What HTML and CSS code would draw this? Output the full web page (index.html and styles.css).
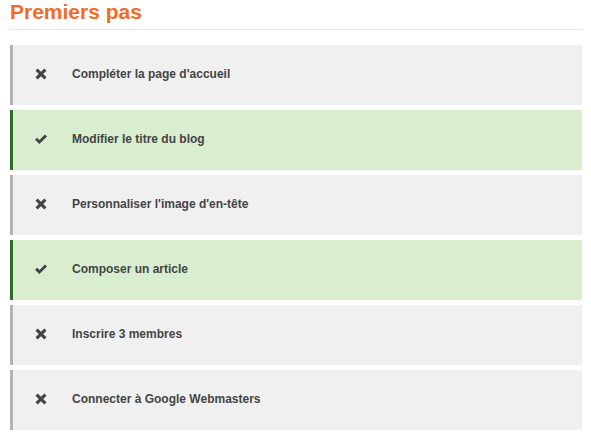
FILE: index.html
```html
<!DOCTYPE html>
<html lang="fr">
<head>
  <meta charset="UTF-8">
  <title>Premiers pas</title>
  <link rel="stylesheet" href="styles.css">
</head>
<body>
  <div class="steps">
    <h2 class="steps-title">Premiers pas</h2>

    <ul class="step-list">
      <li class="step">
        <svg class="step-icon" viewBox="0 0 12 12"><path d="M0.5 2.7 2.7 0.5 6 3.8 9.3 0.5 11.5 2.7 8.2 6 11.5 9.3 9.3 11.5 6 8.2 2.7 11.5 0.5 9.3 3.8 6Z"/></svg>
        <span>Compléter la page d'accueil</span>
      </li>
      <li class="step done">
        <svg class="step-icon" viewBox="0 0 12 12"><path d="M0 6.8 2.1 4.7 4.4 7 10 1.4 12 3.5 4.4 11.1Z"/></svg>
        <span>Modifier le titre du blog</span>
      </li>
      <li class="step">
        <svg class="step-icon" viewBox="0 0 12 12"><path d="M0.5 2.7 2.7 0.5 6 3.8 9.3 0.5 11.5 2.7 8.2 6 11.5 9.3 9.3 11.5 6 8.2 2.7 11.5 0.5 9.3 3.8 6Z"/></svg>
        <span>Personnaliser l'image d'en-tête</span>
      </li>
      <li class="step done">
        <svg class="step-icon" viewBox="0 0 12 12"><path d="M0 6.8 2.1 4.7 4.4 7 10 1.4 12 3.5 4.4 11.1Z"/></svg>
        <span>Composer un article</span>
      </li>
      <li class="step">
        <svg class="step-icon" viewBox="0 0 12 12"><path d="M0.5 2.7 2.7 0.5 6 3.8 9.3 0.5 11.5 2.7 8.2 6 11.5 9.3 9.3 11.5 6 8.2 2.7 11.5 0.5 9.3 3.8 6Z"/></svg>
        <span>Inscrire 3 membres</span>
      </li>
      <li class="step">
        <svg class="step-icon" viewBox="0 0 12 12"><path d="M0.5 2.7 2.7 0.5 6 3.8 9.3 0.5 11.5 2.7 8.2 6 11.5 9.3 9.3 11.5 6 8.2 2.7 11.5 0.5 9.3 3.8 6Z"/></svg>
        <span>Connecter à Google Webmasters</span>
      </li>
    </ul>
  </div>
</body>
</html>
```

FILE: styles.css
```css
body {
  margin: 0;
  font-family: 'Liberation Sans', Arial, sans-serif;
  color: #444;
  background: #fff;
}
.steps {
  padding: 0 9px 0 10px;
}
.steps-title {
  margin: 0;
  height: 29px;
  font-size: 21px;
  line-height: 24px;
  font-weight: bold;
  color: #f26c22;
  border-bottom: 1px solid #e6e6e6;
}
.step-list {
  list-style: none;
  margin: 15px 0 0;
  padding: 0;
  display: flex;
  flex-direction: column;
  gap: 5px;
}
.step {
  display: flex;
  align-items: center;
  height: 60px;
  padding-bottom: 2px;
  box-sizing: border-box;
  background: #f0f0f0;
  border-left: 3px solid #b3b3b3;
  font-size: 12px;
  font-weight: bold;
}
.step.done {
  background: #d9eecf;
  border-left-color: #2e6b2a;
}
.step-icon {
  flex: none;
  width: 12px;
  height: 12px;
  margin: 0 25px 0 22px;
  fill: #444;
}
```
